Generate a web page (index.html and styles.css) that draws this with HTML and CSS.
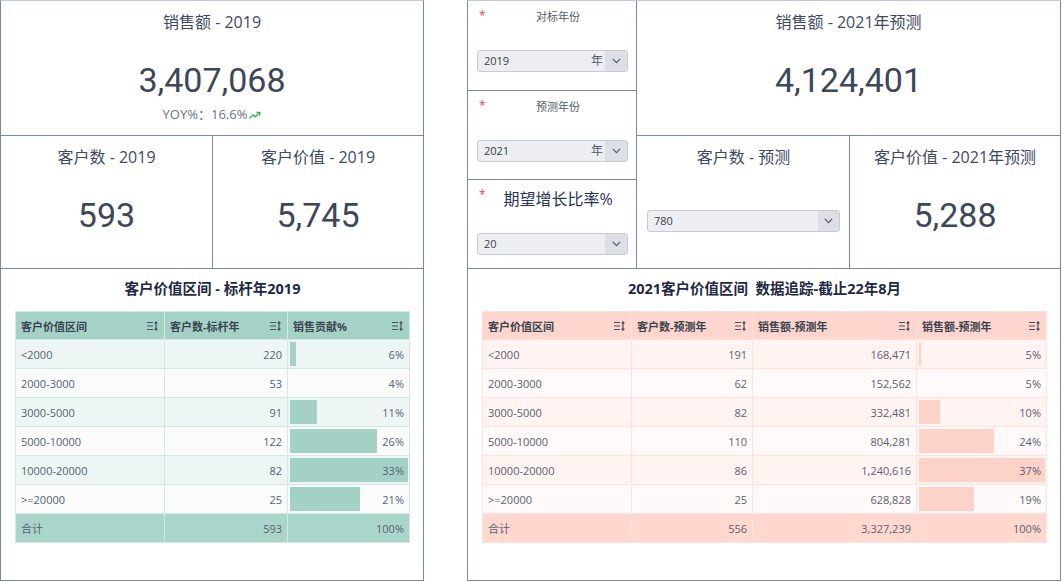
FILE: index.html
```html
<!DOCTYPE html>
<html lang="zh-CN">
<head>
<meta charset="utf-8">
<title>客户价值看板</title>
<link rel="stylesheet" href="styles.css">
</head>
<body>
<div class="page">
  <section class="panel left">
    <div class="kpi">
      <div class="kpi-title">销售额 - 2019</div>
      <div class="kpi-value">3,407,068</div>
      <div class="yoy">YOY%：16.6%<svg class="trend" viewBox="0 0 12 8" width="12" height="8"><polyline points="0.6,7.2 4,3.8 6.2,5.8 10.4,1.6" fill="none" stroke="#34a853" stroke-width="1.3"/><polyline points="7.4,1.3 10.7,1.3 10.7,4.6" fill="none" stroke="#34a853" stroke-width="1.3"/></svg></div>
    </div>
    <div class="kpi-row">
      <div class="kpi">
        <div class="kpi-title">客户数 - 2019</div>
        <div class="kpi-value">593</div>
      </div>
      <div class="kpi">
        <div class="kpi-title">客户价值 - 2019</div>
        <div class="kpi-value">5,745</div>
      </div>
    </div>
    <div class="table-card">
      <h2 class="table-title">客户价值区间 - 标杆年2019</h2>
      <table class="grid teal">
        <colgroup><col class="c-l1"><col class="c-l2"><col class="c-l3"></colgroup>
        <thead>
          <tr>
            <th><div class="th-in"><span>客户价值区间</span><svg class="sort" viewBox="0 0 12 10" width="12" height="10"><path d="M0 1.5h6M0 5h6M0 8.5h6M9 0.8v8.4M7.6 2.3L9 0.8l1.4 1.5M7.6 7.7L9 9.2l1.4-1.5" fill="none" stroke="#4a5160" stroke-width="1.2"/></svg></div></th>
            <th><div class="th-in"><span>客户数-标杆年</span><svg class="sort" viewBox="0 0 12 10" width="12" height="10"><path d="M0 1.5h6M0 5h6M0 8.5h6M9 0.8v8.4M7.6 2.3L9 0.8l1.4 1.5M7.6 7.7L9 9.2l1.4-1.5" fill="none" stroke="#4a5160" stroke-width="1.2"/></svg></div></th>
            <th><div class="th-in"><span>销售贡献%</span><svg class="sort" viewBox="0 0 12 10" width="12" height="10"><path d="M0 1.5h6M0 5h6M0 8.5h6M9 0.8v8.4M7.6 2.3L9 0.8l1.4 1.5M7.6 7.7L9 9.2l1.4-1.5" fill="none" stroke="#4a5160" stroke-width="1.2"/></svg></div></th>
          </tr>
        </thead>
        <tbody>
          <tr><td>&lt;2000</td><td class="num">220</td><td class="num barcell"><span class="bar" style="width:6px"></span><span class="txt">6%</span></td></tr>
          <tr><td>2000-3000</td><td class="num">53</td><td class="num barcell"><span class="txt">4%</span></td></tr>
          <tr><td>3000-5000</td><td class="num">91</td><td class="num barcell"><span class="bar" style="width:27px"></span><span class="txt">11%</span></td></tr>
          <tr><td>5000-10000</td><td class="num">122</td><td class="num barcell"><span class="bar" style="width:87px"></span><span class="txt">26%</span></td></tr>
          <tr><td>10000-20000</td><td class="num">82</td><td class="num barcell"><span class="bar" style="width:118px"></span><span class="txt">33%</span></td></tr>
          <tr><td>&gt;=20000</td><td class="num">25</td><td class="num barcell"><span class="bar" style="width:70px"></span><span class="txt">21%</span></td></tr>
          <tr class="total"><td>合计</td><td class="num">593</td><td class="num">100%</td></tr>
        </tbody>
      </table>
    </div>
  </section>

  <section class="panel right">
    <div class="top">
      <div class="filters">
        <div class="filter">
          <div class="filter-head"><span class="req">*</span><span class="filter-label">对标年份</span></div>
          <div class="select"><span class="val">2019</span><span class="unit">年</span><span class="arrow"><svg viewBox="0 0 9 6" width="9" height="6"><polyline points="0.8,0.8 4.5,4.6 8.2,0.8" fill="none" stroke="#555b66" stroke-width="1.2"/></svg></span></div>
        </div>
        <div class="filter">
          <div class="filter-head"><span class="req">*</span><span class="filter-label">预测年份</span></div>
          <div class="select"><span class="val">2021</span><span class="unit">年</span><span class="arrow"><svg viewBox="0 0 9 6" width="9" height="6"><polyline points="0.8,0.8 4.5,4.6 8.2,0.8" fill="none" stroke="#555b66" stroke-width="1.2"/></svg></span></div>
        </div>
        <div class="filter filter-big">
          <div class="filter-head"><span class="req">*</span><span class="filter-label">期望增长比率%</span></div>
          <div class="select"><span class="val">20</span><span class="arrow"><svg viewBox="0 0 9 6" width="9" height="6"><polyline points="0.8,0.8 4.5,4.6 8.2,0.8" fill="none" stroke="#555b66" stroke-width="1.2"/></svg></span></div>
        </div>
      </div>
      <div class="kpis">
        <div class="kpi">
          <div class="kpi-title">销售额 - 2021年预测</div>
          <div class="kpi-value">4,124,401</div>
        </div>
        <div class="kpi-row kpi-row-r">
          <div class="kpi kpi-input">
            <div class="kpi-title">客户数 - 预测</div>
            <div class="select select-wide"><span class="val">780</span><span class="arrow"><svg viewBox="0 0 9 6" width="9" height="6"><polyline points="0.8,0.8 4.5,4.6 8.2,0.8" fill="none" stroke="#555b66" stroke-width="1.2"/></svg></span></div>
          </div>
          <div class="kpi">
            <div class="kpi-title">客户价值 - 2021年预测</div>
            <div class="kpi-value">5,288</div>
          </div>
        </div>
      </div>
    </div>
    <div class="table-card">
      <h2 class="table-title">2021客户价值区间&nbsp;&nbsp;数据追踪-截止22年8月</h2>
      <table class="grid salmon">
        <colgroup><col class="c-r1"><col class="c-r2"><col class="c-r3"><col class="c-r4"></colgroup>
        <thead>
          <tr>
            <th><div class="th-in"><span>客户价值区间</span><svg class="sort" viewBox="0 0 12 10" width="12" height="10"><path d="M0 1.5h6M0 5h6M0 8.5h6M9 0.8v8.4M7.6 2.3L9 0.8l1.4 1.5M7.6 7.7L9 9.2l1.4-1.5" fill="none" stroke="#4a5160" stroke-width="1.2"/></svg></div></th>
            <th><div class="th-in"><span>客户数-预测年</span><svg class="sort" viewBox="0 0 12 10" width="12" height="10"><path d="M0 1.5h6M0 5h6M0 8.5h6M9 0.8v8.4M7.6 2.3L9 0.8l1.4 1.5M7.6 7.7L9 9.2l1.4-1.5" fill="none" stroke="#4a5160" stroke-width="1.2"/></svg></div></th>
            <th><div class="th-in"><span>销售额-预测年</span><svg class="sort" viewBox="0 0 12 10" width="12" height="10"><path d="M0 1.5h6M0 5h6M0 8.5h6M9 0.8v8.4M7.6 2.3L9 0.8l1.4 1.5M7.6 7.7L9 9.2l1.4-1.5" fill="none" stroke="#4a5160" stroke-width="1.2"/></svg></div></th>
            <th><div class="th-in"><span>销售额-预测年</span><svg class="sort" viewBox="0 0 12 10" width="12" height="10"><path d="M0 1.5h6M0 5h6M0 8.5h6M9 0.8v8.4M7.6 2.3L9 0.8l1.4 1.5M7.6 7.7L9 9.2l1.4-1.5" fill="none" stroke="#4a5160" stroke-width="1.2"/></svg></div></th>
          </tr>
        </thead>
        <tbody>
          <tr><td>&lt;2000</td><td class="num">191</td><td class="num">168,471</td><td class="num barcell"><span class="bar" style="width:2px"></span><span class="txt">5%</span></td></tr>
          <tr><td>2000-3000</td><td class="num">62</td><td class="num">152,562</td><td class="num barcell"><span class="txt">5%</span></td></tr>
          <tr><td>3000-5000</td><td class="num">82</td><td class="num">332,481</td><td class="num barcell"><span class="bar" style="width:21px"></span><span class="txt">10%</span></td></tr>
          <tr><td>5000-10000</td><td class="num">110</td><td class="num">804,281</td><td class="num barcell"><span class="bar" style="width:75px"></span><span class="txt">24%</span></td></tr>
          <tr><td>10000-20000</td><td class="num">86</td><td class="num">1,240,616</td><td class="num barcell"><span class="bar" style="width:126px"></span><span class="txt">37%</span></td></tr>
          <tr><td>&gt;=20000</td><td class="num">25</td><td class="num">628,828</td><td class="num barcell"><span class="bar" style="width:55px"></span><span class="txt">19%</span></td></tr>
          <tr class="total"><td>合计</td><td class="num">556</td><td class="num">3,327,239</td><td class="num">100%</td></tr>
        </tbody>
      </table>
    </div>
  </section>
</div>
</body>
</html>
```

FILE: styles.css
```css
* { box-sizing: border-box; }

html, body {
  margin: 0;
  padding: 0;
  background: #ffffff;
}

body {
  font-family: "Open Sans", "Noto Sans CJK SC", sans-serif;
  color: #3d4659;
}

.page {
  display: flex;
  gap: 43px;
  height: 581px;
  width: 1061px;
}

.panel {
  display: grid;
  gap: 1px;
  background: #7a8aa0;
  border: 1px solid #7a8aa0;
  border-top-color: #c2cad4;
  height: 581px;
}

.left {
  width: 424px;
  grid-template-rows: 134px 132px 1fr;
}

.right {
  width: 594px;
  grid-template-rows: 267px 1fr;
}

.kpi-row {
  display: grid;
  grid-template-columns: 211px 1fr;
  gap: 1px;
  background: #7a8aa0;
}

.kpi-row-r {
  grid-template-columns: 212px 1fr;
}

.kpi {
  background: #ffffff;
  padding-top: 10px;
  text-align: center;
}

.kpi-title {
  font-size: 16px;
  line-height: 22px;
  color: #3e4a61;
}

.kpi-value {
  margin-top: 24px;
  font-family: Roboto, "Open Sans", sans-serif;
  font-size: 34px;
  line-height: 46px;
  color: #3d4758;
}

.yoy {
  margin-top: 3px;
  font-size: 13px;
  line-height: 16px;
  color: #6b7385;
  display: flex;
  justify-content: center;
  align-items: center;
  gap: 2px;
}

.trend {
  display: block;
  margin-top: 2px;
}

/* right top */
.top {
  display: grid;
  grid-template-columns: 168px 1fr;
  gap: 1px;
  background: #7a8aa0;
}

.filters {
  display: grid;
  grid-template-rows: 89px 88px 88px;
  gap: 1px;
  background: #7a8aa0;
}

.kpis {
  display: grid;
  grid-template-rows: 134px 1fr;
  gap: 1px;
  background: #7a8aa0;
}

.filter {
  background: #ffffff;
  padding: 5px 8px 0 9px;
}

.filter-head {
  display: flex;
  align-items: flex-start;
  height: 22px;
  margin-bottom: 22px;
}

.req {
  color: #e5484d;
  font-size: 12px;
  line-height: 14px;
  width: 9px;
  padding-left: 2px;
  padding-top: 3px;
  box-sizing: content-box;
}

.filter-label {
  flex: 1;
  text-align: center;
  font-size: 11px;
  line-height: 22px;
  color: #555c68;
}

.filter-big .filter-head {
  height: 28px;
  margin-bottom: 20px;
}

.filter-big .filter-label {
  font-size: 16px;
  line-height: 28px;
  color: #27325a;
}

.select {
  display: flex;
  align-items: stretch;
  height: 22px;
  border: 1px solid #c6cbd3;
  border-radius: 3px;
  background: #eceef2;
  font-size: 11px;
  color: #3a3f48;
  overflow: hidden;
}

.select .val {
  flex: 1;
  padding-left: 6px;
  line-height: 20px;
}

.select .unit {
  font-size: 12px;
  line-height: 20px;
  color: #555b66;
  padding-right: 2px;
}

.select .arrow {
  width: 22px;
  background: #dcdfe5;
  display: flex;
  align-items: center;
  justify-content: center;
}

.kpi-input {
  padding-left: 10px;
  padding-right: 9px;
}

.select-wide {
  margin-top: 42px;
  text-align: left;
}

.select-wide .arrow {
  width: 21px;
}

/* tables */
.table-card {
  background: #ffffff;
  padding: 10px 13px 0 14px;
}

.table-title {
  margin: 0 0 12px;
  font-size: 14.5px;
  line-height: 20px;
  font-weight: bold;
  text-align: center;
  color: #1f2944;
}

.grid {
  width: 100%;
  border-collapse: collapse;
  table-layout: fixed;
  font-size: 11px;
  color: #596170;
}

.c-l1 { width: 149px; }
.c-l2 { width: 123px; }
.c-l3 { width: 122px; }

.c-r1 { width: 149px; }
.c-r2 { width: 121px; }
.c-r3 { width: 164px; }
.c-r4 { width: 130px; }

.grid th {
  height: 28px;
  padding: 0 5px 0 5px;
  font-weight: bold;
  font-size: 11px;
  color: #3c4350;
  text-align: left;
}

.th-in {
  display: flex;
  align-items: center;
  justify-content: space-between;
}

.sort {
  display: block;
  flex: none;
}

.grid td {
  height: 29px;
  padding: 0 5px;
  white-space: nowrap;
}

.grid td.num {
  text-align: right;
}

.barcell {
  position: relative;
}

.bar {
  position: absolute;
  left: 2px;
  top: 2px;
  bottom: 2px;
}

.barcell .txt {
  position: relative;
}

/* teal */
.teal th, .teal td { border: 1px solid #d2e9e3; }
.teal thead tr { background: #a4d2c7; }
.teal tbody tr:nth-child(odd) { background: #edf6f4; }
.teal tbody tr:nth-child(even) { background: #f9fcfb; }
.teal tbody tr.total { background: #aad5cb; }
.teal .bar { background: #a3d1c5; }

/* salmon */
.salmon th, .salmon td { border: 1px solid #fde3dc; }
.salmon thead tr { background: #fed6cd; }
.salmon tbody tr:nth-child(odd) { background: #fff4f1; }
.salmon tbody tr:nth-child(even) { background: #fffaf9; }
.salmon tbody tr.total { background: #fed8cf; }
.salmon .bar { background: #fdd2c8; }
```
